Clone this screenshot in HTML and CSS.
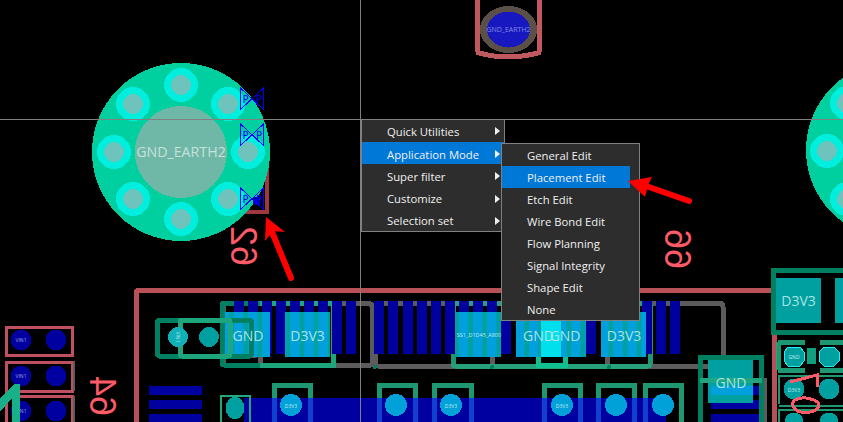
FILE: index.html
```html
<!DOCTYPE html>
<html lang="en">
<head>
<meta charset="utf-8">
<title>PCB editor – Application Mode menu</title>
<link rel="stylesheet" href="styles.css">
</head>
<body>
<main class="stage">
<svg class="board" viewBox="0 0 843 422" width="843" height="422" aria-label="PCB layout">
  <defs>
    <pattern id="stripes" patternUnits="userSpaceOnUse" x="234" y="0" width="14.050" height="10">
      <rect class="stripegap" x="0" y="0" width="14.050" height="10"/>
      <rect class="stripebar" x="0" y="0" width="9.500" height="10"/>
    </pattern>
  </defs>
  <!-- outline -->
  <path class="outline" d="M136 422V293q0-2 2-2.500H773M774 335V422"/>
  <!-- top mounting part -->
  <path class="part" d="M477.500 0V52M539.500 0V52"/>
  <path class="part" d="M476 52q32 10 65 0"/>
  <ellipse class="hole" cx="508.500" cy="29.500" rx="28.500" ry="23.500"/>
  <ellipse class="holein" cx="508.500" cy="29.500" rx="21.500" ry="18"/>
  <text class="tiny" x="508.500" y="32" text-anchor="middle">GND_EARTH2</text>

  <!-- left small connectors -->
  <rect class="conn" x="6.500" y="327" width="66" height="28"/>
  <rect class="conn" x="6.500" y="362" width="66" height="29"/>
  <path class="conn" d="M6.500 422V396H72.500V422"/>
  <path class="grayl thin" d="M74 361V391M74 396V422"/>
  <circle class="blue" cx="21" cy="340" r="10.500"/><circle class="blue" cx="56" cy="340" r="10.500"/>
  <circle class="blue" cx="21" cy="376" r="10.500"/><circle class="blue" cx="56" cy="376" r="10.500"/>
  <circle class="blue" cx="21" cy="411" r="10.500"/><circle class="blue" cx="56" cy="411" r="10.500"/>
  <text class="micro" x="21" y="342" text-anchor="middle">VIN1</text>
  <text class="micro" x="21" y="378" text-anchor="middle">VIN1</text>
  <text class="micro" x="21" y="413" text-anchor="middle">VIN1</text>
  <path class="greenfill" d="M0 398L15 384H20V422H12V398L0 412Z"/>

  <!-- silkscreen reference marks -->
  <text class="silk" transform="matrix(0 -1 -1 0 90 416)">64</text>
  <text class="silk" transform="matrix(0 -1 -1 0 231 266)">62</text>
  <text class="silk" transform="matrix(0 -1 -1 0 665 269)">66</text>

  <!-- gray traces -->
  <path class="grayl" d="M180 358V320M254 320V358"/>
  <rect class="grayl" x="223" y="303.500" width="149" height="62" rx="3"/>
  <path class="grayl" d="M378 303.500H720q3 0 3 3V363q0 3-3 3H378q-3 0-3-3V306q0-3 3-3"/>
  <path class="grayl" d="M260 354V366M492 354V366M607 354V366"/>
  <path class="grayl" d="M698 380.500H764V422"/>
  <!-- big green frames -->
  <rect class="gdark" x="222" y="303" width="111" height="62" rx="2"/>
  <path class="green" d="M260 365.500H333V303H260"/>
  <rect class="green" x="453" y="303" width="197" height="63" rx="2"/>
  <path class="gbright" d="M538 354V365H565V354"/>
  <circle class="dot" cx="492" cy="367" r="2"/><circle class="dot" cx="609" cy="367" r="2"/><circle class="dot" cx="375" cy="367" r="2"/>

  <!-- header bars -->
  <g class="bars">
    <rect x="234" y="301" width="9.500" height="53"/><rect x="248" y="301" width="9.500" height="53"/>
    <rect x="262" y="301" width="9.500" height="53"/><rect x="276" y="301" width="9.500" height="53"/>
    <rect x="290" y="301" width="9.500" height="53"/><rect x="304" y="301" width="9.500" height="53"/>
    <rect x="318" y="301" width="9.500" height="53"/><rect x="332" y="301" width="9.500" height="53"/>
    <rect x="346" y="301" width="9.500" height="53"/><rect x="374" y="301" width="9.500" height="53"/>
    <rect x="388" y="301" width="9.500" height="53"/><rect x="403" y="301" width="9.500" height="53"/>
    <rect x="417" y="301" width="9.500" height="53"/><rect x="431" y="301" width="9.500" height="53"/>
    <rect x="445" y="301" width="9.500" height="53"/><rect x="459" y="301" width="9.500" height="53"/>
    <rect x="473" y="301" width="9.500" height="53"/><rect x="487" y="301" width="9.500" height="53"/>
    <rect x="501" y="301" width="9.500" height="53"/><rect x="586" y="301" width="9.500" height="53"/>
    <rect x="642" y="301" width="9.500" height="53"/><rect x="656" y="301" width="9.500" height="53"/>
    <rect x="670" y="301" width="9.500" height="53"/>
    <rect x="149" y="386" width="53" height="9"/><rect x="149" y="400" width="53" height="9"/><rect x="149" y="414" width="53" height="9"/>
    <rect x="244" y="398" width="422" height="24"/>
    <rect x="711" y="400" width="53" height="9"/><rect x="711" y="414" width="53" height="9"/>
  </g>
  <!-- big pads -->
  <rect class="padstripe" x="225" y="312" width="45" height="45"/>
  <rect class="padstripe" x="285" y="312" width="45" height="45"/>
  <rect class="padstripe" x="456" y="312" width="45" height="45"/>
  <rect class="padstripe" x="516" y="312" width="45" height="45"/>
  <rect class="padstripe" x="541" y="312" width="45" height="45"/>
  <rect class="padstripe" x="601" y="312" width="45" height="45"/>
  <rect class="padglow" x="541" y="312" width="20" height="45"/>
  <rect class="pad" x="708" y="359" width="45" height="44"/>
  <rect class="pad" x="776" y="278" width="45" height="45"/>
  <rect class="pad" x="835" y="278" width="10" height="45"/>
  <rect class="padsky" x="711" y="386" width="42" height="9"/>
  <rect class="bar" x="753" y="386" width="11" height="9"/>
  <!-- small green frames -->
  <rect class="gdark" x="157.500" y="320" width="94" height="36" rx="2"/>
  <rect class="green" x="180" y="320" width="50" height="36" rx="2"/>
  <path class="greenthin" d="M221 422V396H250V422"/>
  <path class="green" d="M274 422V385.500H310V422M379 422V385.500H415V422M434 422V385.500H471V422M544 422V385.500H580V422M598 422V385.500H634V422M645 422V385.500H681V422"/>
  <path class="overstrip" d="M274 398V422M310 398V422M379 398V422M415 398V422M434 398V422M471 398V422M544 398V422M580 398V422M598 398V422M634 398V422M645 398V422"/>
  <path class="gdark" d="M700 422V357H761V422"/>
  <path class="green" d="M700 380.500H762"/>
  <path class="gdark" d="M843 270H773V332.500H843"/>
  <!-- vias/connector circles -->
  <circle class="tealc" cx="178" cy="337" r="10"/>
  <circle class="pin" cx="209" cy="337" r="10"/>
  <text class="micro vert" transform="rotate(90 178 337)" x="178" y="339" text-anchor="middle">VIN1</text>
  <ellipse class="pin" cx="235" cy="408" rx="9.500" ry="11"/>
  <circle class="skyc" cx="291" cy="405" r="11"/>
  <circle class="skyc" cx="396" cy="405" r="11"/>
  <circle class="skyc" cx="451" cy="405" r="11"/>
  <circle class="skyc" cx="562" cy="405" r="11"/>
  <circle class="skyc" cx="616" cy="405" r="11"/>
  <circle class="skyc" cx="663" cy="405" r="11"/>
  <text class="micro bright" x="291" y="408" text-anchor="middle">D3V3</text>
  <text class="micro bright" x="451" y="408" text-anchor="middle">D3V3</text>
  <text class="micro bright" x="562" y="408" text-anchor="middle">D3V3</text>
  <!-- lower right cluster -->
  <path class="green" d="M778 342H805M820 342H843M778 370H805M820 370H843M778 342V370"/>
  <polygon class="octa" points="788,347 800,347 804,352 804,361 800,366 788,366 784,361 784,352"/>
  <polygon class="octa" points="824,347 834,347 839,352 839,361 834,366 824,366 819,361 819,352"/>
  <text class="micro bright" x="794" y="359" text-anchor="middle">GND</text>
  <rect class="greenblock" x="807" y="348" width="9" height="16"/>
  <path class="green thin" d="M779 404V376H843M779 406H843M779 422V410H843"/>
  <circle class="pin" cx="794" cy="389" r="10.500"/><circle class="pin" cx="829" cy="389" r="10.500"/>
  <circle class="pin" cx="794" cy="422" r="9.500"/><circle class="pin" cx="829" cy="422" r="9.500"/>
  <text class="micro bright" x="794" y="392" text-anchor="middle">D3V3</text>
  <path class="silkline" d="M790 382L817 375V387M796 410C784 399 806 393 819 403C820 414 800 414 796 410"/>
  <!-- pad labels -->
  <text class="padl" x="248" y="341" text-anchor="middle">GND</text>
  <text class="padl" x="307.500" y="341" text-anchor="middle">D3V3</text>
  <text class="tinyl" x="479" y="337" text-anchor="middle">SS1_D1D45_A800</text>
  <text class="padl" x="538.500" y="341" text-anchor="middle">GND</text>
  <text class="padl" x="565" y="341" text-anchor="middle">GND</text>
  <text class="padl" x="624" y="341" text-anchor="middle">D3V3</text>
  <text class="padl" x="731" y="388" text-anchor="middle">GND</text>
  <text class="padl" x="798.500" y="306" text-anchor="middle">D3V3</text>

  <!-- right mounting hole -->
  <circle class="mount" cx="895" cy="150" r="89"/>
  <circle class="ring" cx="827" cy="151" r="17"/><circle class="core" cx="827" cy="151" r="10"/>
  <circle class="ring" cx="847" cy="103" r="17"/><circle class="core" cx="847" cy="103" r="10"/>
  <circle class="ring" cx="847" cy="199" r="17"/><circle class="core" cx="847" cy="199" r="10"/>

  <!-- red part corner + left mounting hole -->
  <path class="corner" d="M267 165V212H240"/>
  <circle class="mount" cx="181" cy="152" r="89"/>
  <circle class="ring" cx="181" cy="85" r="17"/><circle class="core" cx="181" cy="85" r="10"/>
  <circle class="ring" cx="133" cy="104" r="17"/><circle class="core" cx="133" cy="104" r="10"/>
  <circle class="ring" cx="228" cy="104" r="17"/><circle class="core" cx="228" cy="104" r="10"/>
  <circle class="ring" cx="114" cy="152" r="17"/><circle class="core" cx="114" cy="152" r="10"/>
  <circle class="ring" cx="248" cy="152" r="17"/><circle class="core" cx="248" cy="152" r="10"/>
  <circle class="ring" cx="133" cy="199" r="17"/><circle class="core" cx="133" cy="199" r="10"/>
  <circle class="ring" cx="228" cy="199" r="17"/><circle class="core" cx="228" cy="199" r="10"/>
  <circle class="ring" cx="181" cy="219" r="17"/><circle class="core" cx="181" cy="219" r="10"/>
  <circle class="centre" cx="181" cy="152" r="46"/>
  <text class="label" x="181" y="157" text-anchor="middle">GND_EARTH2</text>
  <circle class="holein2" cx="257" cy="201" r="4.500"/>

  <!-- bowtie markers -->
  <path class="tie" d="M240.500 88V109.500L263.500 88V109.500Z"/>
  <path class="tie" d="M240.500 124V145.500L263.500 124V145.500Z"/>
  <path class="tie" d="M240.500 188V209.500L263.500 188V209.500Z"/>
  <text class="tiep" x="245.500" y="103">P</text><text class="tiep" x="259" y="103">P</text>
  <text class="tiep" x="245.500" y="139">P</text><text class="tiep" x="259" y="139">P</text>
  <text class="tiep" x="245.500" y="203">P</text><text class="tiep" x="259" y="203">P</text>

  <!-- crosshair -->
  <path class="cross" d="M0 119.500H843M360.500 0V422"/>
</svg>

<nav class="menu" aria-label="Context menu">
  <div class="item"><span>Quick Utilities</span><i class="caret"></i></div>
  <div class="item active"><span>Application Mode</span><i class="caret"></i>
    <div class="submenu">
      <div class="subitem"><span>General Edit</span></div>
      <div class="subitem active"><span>Placement Edit</span></div>
      <div class="subitem"><span>Etch Edit</span></div>
      <div class="subitem"><span>Wire Bond Edit</span></div>
      <div class="subitem"><span>Flow Planning</span></div>
      <div class="subitem"><span>Signal Integrity</span></div>
      <div class="subitem"><span>Shape Edit</span></div>
      <div class="subitem"><span>None</span></div>
    </div>
  </div>
  <div class="item"><span>Super filter</span><i class="caret"></i></div>
  <div class="item"><span>Customize</span><i class="caret"></i></div>
  <div class="item"><span>Selection set</span><i class="caret"></i></div>
</nav>

<svg class="annot" viewBox="0 0 843 422" width="843" height="422" aria-hidden="true">
  <path class="arrowline" d="M272 232L291 278"/>
  <polygon class="arrowhead" points="266,217 285,232 273,231 265,241"/>
  <path class="arrowline" d="M646 186L689 201"/>
  <polygon class="arrowhead" points="628,181 652,177 648,185 645,197"/>
</svg>
</main>
</body>
</html>
```
FILE: styles.css
```css
html, body { margin: 0; padding: 0; background: #000; }
.stage { position: relative; width: 843px; height: 422px; overflow: hidden; background: #000; }
.board { display: block; fill: none; shape-rendering: crispEdges; font-family: "Open Sans", "Liberation Sans", sans-serif; }
.annot { position: absolute; left: 0; top: 0; z-index: 2; pointer-events: none; }

.outline { stroke: #b85058; stroke-width: 5; }
.part { stroke: #c05860; stroke-width: 5; }
.hole { fill: #5a5048; }
.holein { fill: #1818c0; }
.tiny { font-size: 7px; fill: #8088e0; }
.conn { stroke: #c05060; stroke-width: 3; }
.blue { fill: #0000a0; }
.micro { font-size: 5px; fill: #a0a0e0; }
.micro.vert { fill: #a0e0e0; }
.micro.bright { fill: #c8ecf4; }
.greenfill { fill: #18b088; }
.silk { font: 36px "Liberation Sans", sans-serif; fill: #ff5a68; }
.silkline { stroke: #ff5a68; stroke-width: 3; }
.bars, .bar { fill: #0000a0; }
.grayl { stroke: #5c5c5c; stroke-width: 5; fill: none; }
.grayl.thin { stroke-width: 2.5; }
.stripegap { fill: #00a0a0; }
.stripebar { fill: #00a0dc; }
.padstripe { fill: url(#stripes); }
.padglow { fill: #00e0ec; }
.pad { fill: #00a0a0; }
.padsky { fill: #00a0dc; }
.gdark { stroke: #008060; stroke-width: 5; fill: none; }
.green { stroke: #20a880; stroke-width: 5; fill: none; opacity: .9; }
.green.thin { stroke-width: 2.5; }
.gbright { stroke: #10c090; stroke-width: 5; }
.dot { fill: #008060; }
.greenthin { stroke: #20a880; stroke-width: 2; }
.overstrip { stroke: #1040d0; stroke-width: 5; }
.tealc { fill: #10b0b8; }
.pin { fill: #00a0a0; }
.skyc { fill: #00a0d8; }
.octa { fill: #00a0a0; stroke: #20f0f0; stroke-width: 1; }
.greenblock { fill: #10a080; }
.padl { font-size: 14px; fill: #a8e4e4; }
.tinyl { font-size: 5.5px; fill: #c0ecf0; }
.mount { fill: #00d0a0; }
.ring { fill: #00eedd; }
.core { fill: #6ec4bc; }
.centre { fill: #6fb8a8; }
.label { font-size: 14.2px; fill: #c8e0da; }
.corner { stroke: #a03840; stroke-width: 3.5; }
.holein2 { fill: #0000a8; }
.tie { stroke: #0000ff; stroke-width: 1; }
.tiep { font: 10px "DejaVu Sans Mono", monospace; fill: #0000ff; text-anchor: middle; }
.cross { stroke: #808080; stroke-width: 1; }
.arrowline { fill: none; stroke: #ff0000; stroke-width: 6; stroke-linecap: round; }
.arrowhead { fill: #ff0000; }

.menu {
  position: absolute; left: 361px; top: 119px; width: 142px;
  display: flex; flex-direction: column;
  background: #2d2d2d; border: 1px solid #808080;
  font: 11.3px "Open Sans", "Liberation Sans", sans-serif; color: #f0f0f0;
}
.item, .subitem { position: relative; display: flex; align-items: center; box-sizing: border-box; height: 22px; }
.item { height: 22.2px; padding: 2px 4px 0 25px; }
.item:first-child { padding-top: 0; }
.item.active, .subitem.active { background: #0078d7; }
.caret { margin-left: auto; width: 0; height: 0; border-left: 5px solid #f0f0f0; border-top: 4px solid transparent; border-bottom: 4px solid transparent; }
.submenu {
  position: absolute; left: 139px; top: 1px; width: 137px;
  display: flex; flex-direction: column;
  background: #2d2d2d; border: 1px solid #808080; z-index: 1;
}
.subitem { padding: 0 0 0 25px; width: 128px; }
```
